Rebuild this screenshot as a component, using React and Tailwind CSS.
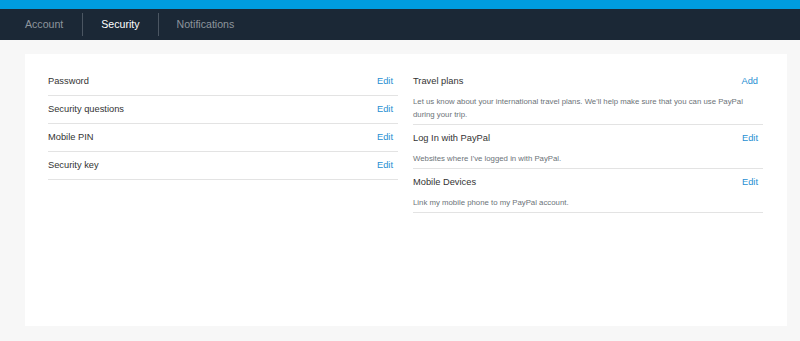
import React from 'react';

const tabs = [
    { label: 'Account', active: false },
    { label: 'Security', active: true },
    { label: 'Notifications', active: false },
];

const leftRows = ['Password', 'Security questions', 'Mobile PIN', 'Security key'];

const rightRows = [
    {
        title: 'Travel plans',
        action: 'Add',
        desc: "Let us know about your international travel plans. We'll help make sure that you can use PayPal during your trip.",
    },
    { title: 'Log In with PayPal', action: 'Edit', desc: "Websites where I've logged in with PayPal." },
    { title: 'Mobile Devices', action: 'Edit', desc: 'Link my mobile phone to my PayPal account.' },
];

const App = () => {
    return (
        <div className="w-[800px] h-[341px] bg-[#f7f7f7] flex flex-col" style={{ fontFamily: '"Liberation Sans", Arial, sans-serif' }}>
            <div className="h-[9px] bg-[#009cde]"></div>

            <div className="h-[31px] bg-[#1b2836] flex items-stretch pl-[25px]">
                {tabs.map((tab, i) => (
                    <React.Fragment key={tab.label}>
                        {i > 0 && <div className="w-px bg-[#4b5662] my-[4px]"></div>}
                        <div
                            className={`flex items-center text-[10.6px] ${i === 0 ? 'pr-[19px]' : 'px-[18px]'} ${tab.active ? 'text-white' : 'text-[#8d959d]'}`}
                        >
                            {tab.label}
                        </div>
                    </React.Fragment>
                ))}
            </div>

            <div className="mt-[14px] ml-[25px] mr-[13px] h-[272px] bg-white pt-[14px] pl-[23px] pr-[24px] flex gap-[15px]">
                <div className="w-[350px]">
                    {leftRows.map(row => (
                        <div key={row} className="h-[28px] flex items-center justify-between border-b border-[#e3e3e3] pr-[5px]">
                            <span className="text-[9.3px] text-[#333]">{row}</span>
                            <span className="text-[9.3px] text-[#1f8fd2]">Edit</span>
                        </div>
                    ))}
                </div>

                <div className="w-[350px]">
                    {rightRows.map(row => (
                        <div key={row.title} className="border-b border-[#e3e3e3] pb-[3px]">
                            <div className="h-[27px] pt-[6px] flex justify-between leading-[14px] pr-[5px]">
                                <span className="text-[9.3px] text-[#333]">{row.title}</span>
                                <span className="text-[9.3px] text-[#1f8fd2]">{row.action}</span>
                            </div>
                            <div className="text-[7.8px] leading-[13px] text-[#6c7378] pr-[10px]">{row.desc}</div>
                        </div>
                    ))}
                </div>
            </div>
        </div>
    );
};

export default App;
